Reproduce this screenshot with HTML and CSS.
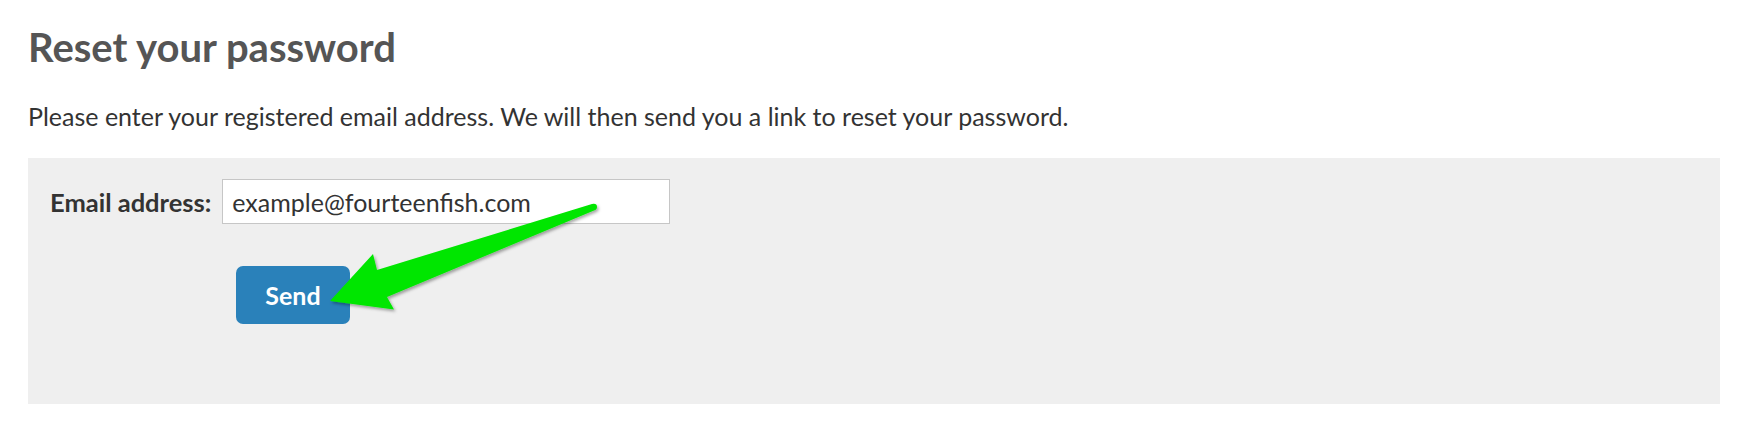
FILE: index.html
```html
<!DOCTYPE html>
<html lang="en">
<head>
<meta charset="utf-8">
<title>Reset your password</title>
<link rel="stylesheet" href="styles.css">
</head>
<body>
<main class="page">
  <h1 class="title">Reset your password</h1>
  <p class="intro">Please enter your registered email address. We will then send you a link to reset your password.</p>
  <form class="panel">
    <div class="row">
      <label class="label" for="email">Email address:</label>
      <input class="input" id="email" type="text" value="example@fourteenfish.com">
    </div>
    <div class="actions">
      <button class="btn" type="button">Send</button>
    </div>
    <svg class="arrow" width="1744" height="438" viewBox="0 0 1744 438" aria-hidden="true">
      <defs>
        <filter id="sh" x="-10%" y="-20%" width="130%" height="150%">
          <feDropShadow dx="1.5" dy="2" stdDeviation="1.5" flood-color="#000" flood-opacity="0.35"/>
        </filter>
      </defs>
      <path filter="url(#sh)" fill="#00e600" d="M330 301 L373 254 L377 270 L592 204 Q597 203 597 207 Q597 209.5 594 210.5 L387 297 L394 309.5 Z"/>
    </svg>
  </form>
</main>
</body>
</html>
```
FILE: styles.css
```css
html, body {
  margin: 0;
  padding: 0;
  background: #ffffff;
}
body {
  font-family: Lato, "Open Sans", "Liberation Sans", sans-serif;
  color: #333333;
}
.page {
  padding: 23px 24px 0 28px;
  position: relative;
}
.title {
  margin: 0;
  font-size: 40px;
  font-weight: 700;
  line-height: 48px;
  color: #555555;
}
.intro {
  margin: 31px 0 0 0;
  font-size: 25px;
  line-height: 29px;
  color: #333333;
}
.panel {
  margin-top: 27px;
  background: #efefef;
  height: 246px;
  box-sizing: border-box;
  padding: 21px 22px 0 22px;
}
.row {
  display: flex;
  align-items: center;
  gap: 11px;
}
.label {
  font-size: 25.5px;
  font-weight: 700;
  color: #333333;
}
.input {
  width: 448px;
  height: 45px;
  box-sizing: border-box;
  border: 1px solid #c6c6c6;
  background: #ffffff;
  padding: 0 9px;
  font-family: Lato, "Open Sans", "Liberation Sans", sans-serif;
  font-size: 25px;
  color: #333333;
  outline: none;
  margin: 0;
}
.actions {
  margin-top: 42px;
  padding-left: 186px;
}
.btn {
  width: 114px;
  height: 58px;
  border: none;
  border-radius: 7px;
  background: #2a81ba;
  color: #ffffff;
  font-family: Lato, "Open Sans", "Liberation Sans", sans-serif;
  font-size: 25px;
  font-weight: 700;
  padding: 0;
  margin: 0;
}
.arrow {
  position: absolute;
  left: 0;
  top: 0;
  pointer-events: none;
}
```
